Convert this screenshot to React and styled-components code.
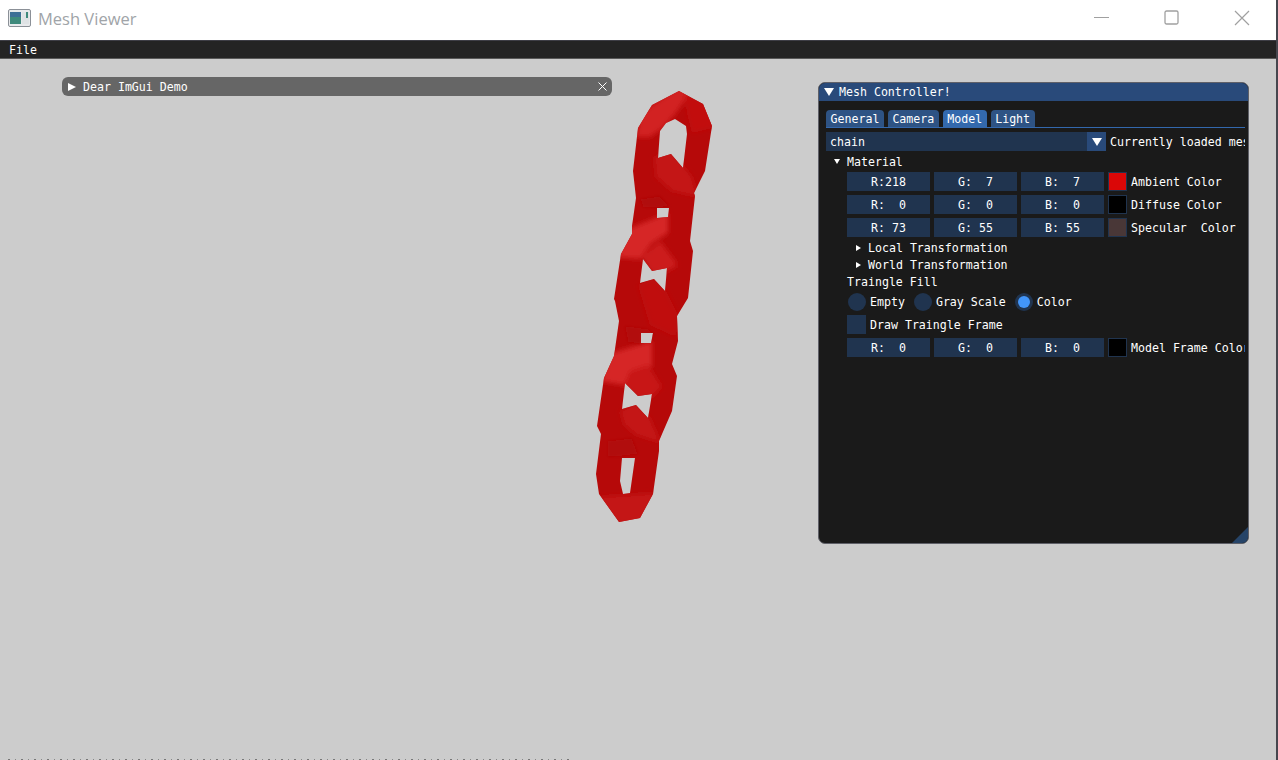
import styled, { createGlobalStyle } from 'styled-components';

const GlobalStyle = createGlobalStyle`
  html, body {
    margin: 0;
    padding: 0;
    width: 1278px;
    height: 760px;
    overflow: hidden;
    background: #ccc;
  }
`;

const Screen = styled.div`
  position: relative;
  width: 1278px;
  height: 760px;
  box-sizing: border-box;
  border-right: 2px solid #46464e;
  display: flex;
  flex-direction: column;
  overflow: hidden;
  font-family: "DejaVu Sans Mono", "Liberation Mono", monospace;
  font-size: 11.6px;
  color: #fff;
  white-space: pre;
`;

const TitleBar = styled.header`
  height: 40px;
  flex: none;
  display: flex;
  align-items: center;
  background: #fff;
  padding-left: 8px;
  font-family: "Open Sans", "Noto Sans", sans-serif;
`;

const AppName = styled.span`
  margin-left: 6px;
  margin-top: -3px;
  font-size: 16.5px;
  color: #a0a4a8;
`;

const WinButtons = styled.div`
  margin-left: auto;
  display: flex;
  align-items: center;
  gap: 55px;
  margin-right: 26px;
  margin-top: -5px;
`;

const MenuBar = styled.nav`
  height: 19px;
  flex: none;
  display: flex;
  align-items: center;
  padding: 1px 0 0 9px;
  background: #242424;
  border-top: 1px solid #3e3e46;
  border-bottom: 1px solid #5a5a5a;
  box-sizing: border-box;
`;

const Canvas = styled.main`
  flex: 1;
  position: relative;
  background: #ccc;
`;

/* floating imgui windows sit on a free canvas */
const Collapsed = styled.div`
  position: absolute;
  left: 62px;
  top: 18px;
  width: 550px;
  height: 19px;
  box-sizing: border-box;
  border-radius: 6px;
  background: #666;
  display: flex;
  align-items: center;
  padding: 0 5px 0 6px;
`;

const TriRight = styled.i`
  width: 0;
  height: 0;
  margin-right: ${(p) => p.$gap}px;
  border-left: ${(p) => p.$size}px solid #fff;
  border-top: ${(p) => p.$size * 0.6}px solid transparent;
  border-bottom: ${(p) => p.$size * 0.6}px solid transparent;
`;

const TriDown = styled.i`
  width: 0;
  height: 0;
  margin-right: ${(p) => p.$gap}px;
  border-top: ${(p) => p.$size}px solid #fff;
  border-left: ${(p) => p.$size * 0.65}px solid transparent;
  border-right: ${(p) => p.$size * 0.65}px solid transparent;
`;

const CloseIcon = styled.svg`
  margin-left: auto;
  width: 9px;
  height: 9px;
`;

const Controller = styled.section`
  position: absolute;
  left: 818px;
  top: 23px;
  width: 431px;
  height: 462px;
  box-sizing: border-box;
  border: 1px solid #5f6068;
  border-radius: 7px;
  background: #1a1a1a;
  overflow: hidden;
  display: flex;
  flex-direction: column;
`;

const ControllerTitle = styled.div`
  height: 18px;
  flex: none;
  display: flex;
  align-items: center;
  padding-left: 5px;
  background: #294a7a;
`;

const Body = styled.div`
  position: relative;
  flex: 1;
  padding: 9px 3px 0 7px;
  overflow: hidden;
`;

const Tabs = styled.div`
  display: flex;
  gap: 4px;
  height: 17px;
  border-bottom: 1px solid #3368ad;
`;

const Tab = styled.div`
  height: 17px;
  padding: 0 4.5px;
  display: flex;
  align-items: center;
  border-radius: 4px 4px 0 0;
  background: ${(p) => (p.$active ? '#3369ad' : '#2e5384')};
`;

const ComboRow = styled.div`
  display: flex;
  align-items: center;
  gap: 4px;
  margin-top: 4px;
  height: 19px;
  overflow: hidden;
`;

const Combo = styled.div`
  flex: none;
  width: 280px;
  height: 19px;
  display: flex;
  background: #20344f;
`;

const ComboValue = styled.div`
  flex: 1;
  padding-left: 4px;
  display: flex;
  align-items: center;
`;

const ComboArrow = styled.div`
  width: 19px;
  display: flex;
  align-items: center;
  justify-content: center;
  background: #294a7a;
`;

const TreeNode = styled.div`
  display: flex;
  align-items: center;
  height: 17px;
  margin-top: ${(p) => p.$top ?? 0}px;
  padding-left: ${(p) => p.$indent}px;
`;

const Plain = styled.div`
  height: 17px;
  display: flex;
  align-items: center;
  padding-left: 21px;
`;

const ColorRow = styled.div`
  display: flex;
  align-items: center;
  height: 19px;
  margin-top: ${(p) => p.$top ?? 4}px;
  padding-left: 21px;
  gap: 4px;
  overflow: hidden;
`;

const Channel = styled.div`
  flex: none;
  width: 83px;
  height: 19px;
  display: flex;
  align-items: center;
  justify-content: center;
  background: #20344f;
`;

const Swatch = styled.div`
  flex: none;
  width: 19px;
  height: 19px;
  box-sizing: border-box;
  border: 1px solid #20344f;
  background: ${(p) => p.$color};
`;

const RadioRow = styled.div`
  display: flex;
  align-items: center;
  height: 19px;
  margin-top: 2px;
  padding-left: 22px;
`;

const Radio = styled.span`
  width: 18px;
  height: 18px;
  border-radius: 50%;
  background: #20344f;
  margin-right: 4px;
  display: flex;
  align-items: center;
  justify-content: center;
  &::after {
    content: '';
    width: 12px;
    height: 12px;
    border-radius: 50%;
    background: ${(p) => (p.$on ? '#4296fa' : 'transparent')};
  }
`;

const RadioLabel = styled.span`
  margin-right: 9px;
`;

const CheckRow = styled.div`
  display: flex;
  align-items: center;
  height: 19px;
  margin-top: 4px;
  padding-left: 21px;
  gap: 4px;
`;

const Check = styled.span`
  width: 19px;
  height: 19px;
  background: #20344f;
`;

const Grip = styled.div`
  position: absolute;
  right: 0;
  bottom: 0;
  width: 16px;
  height: 16px;
  background: #264468;
  clip-path: polygon(100% 0, 100% 100%, 0 100%);
`;

const ChainSvg = styled.svg`
  position: absolute;
  left: 0;
  top: -58px;
  width: 1278px;
  height: 760px;
  pointer-events: none;
`;

const BottomNoise = styled.div`
  position: absolute;
  left: 8px;
  bottom: 0;
  width: 564px;
  height: 1px;
  background: repeating-linear-gradient(90deg, #777 0 2px, #ccc 2px 7px, #888 7px 8px, #ccc 8px 13px);
`;

const outline =
  'M679 90L703 103L712 125L705 170L694 192L695 195L690 240L693 250L688 297L677 315L678 340L672 363L677 375L672 410L659 440L659 450L653 493L640 517L619 521L599 493L596 473L601 433L597 425L604 377L614 355L619 320L615 300L614 298L621 253L632 233L632 225L636 197L633 170L638 127L652 104Z' +
  'M660 130L666 122L675 118L686 125L687 133L683 167L671 153L658 157Z' +
  'M657 207L669 207L668 216L657 217Z' +
  'M643 258L652 270L667 267L665 290L654 278L640 282Z' +
  'M641 332L653 332L651 342L641 342Z' +
  'M625 382L638 395L652 393L648 417L636 404L622 408Z' +
  'M622 457L635 457L630 492L623 493L620 480Z';

/* lit faces of each link, blurred so they melt into the base red */
const softShades = [
  ['640,112 679,86 690,92 676,112 664,126 650,136 636,136', '#d22222'],
  ['684,94 708,100 716,126 692,132 688,116', '#c21010'],
  ['654,156 672,150 692,176 698,196 672,190 656,176', '#c41414'],
  ['668,212 628,228 616,256 640,258 652,242 668,232', '#d62626'],
  ['642,256 660,240 678,264 668,270 652,272', '#cc1c1c'],
  ['638,284 654,278 666,290 678,314 676,336 650,324', '#c01111'],
  ['652,340 612,352 600,380 624,384 634,370 652,366', '#d62626'],
  ['624,384 630,370 648,364 662,386 652,396 638,398', '#c81818'],
  ['620,410 636,402 650,417 661,442 636,434 624,424', '#c41414'],
  ['598,496 656,492 642,520 618,524', '#c41616'],
];

/* darker creases where one link passes under another */
const creases = [
  ['640,198 660,195 669,205 657,207 643,206', '#b00707'],
  ['625,325 648,328 656,335 641,332 641,343 628,341', '#b20808'],
  ['608,440 632,437 638,453 622,455 608,456', '#b10707'],
];

const Chain = () => (
  <ChainSvg viewBox="0 0 1278 760">
    <defs>
      <clipPath id="silhouette">
        <path d={outline} clipRule="evenodd" />
      </clipPath>
      <filter id="soft" x="-20%" y="-20%" width="140%" height="140%">
        <feGaussianBlur stdDeviation="2.4" />
      </filter>
      <filter id="crease" x="-20%" y="-20%" width="140%" height="140%">
        <feGaussianBlur stdDeviation="1.5" />
      </filter>
    </defs>
    <path d={outline} fill="#b60909" fillRule="evenodd" />
    <g clipPath="url(#silhouette)">
      <g filter="url(#soft)">
        {softShades.map(([points, fill]) => (
          <polygon key={points} points={points} fill={fill} />
        ))}
      </g>
      <g filter="url(#crease)">
        {creases.map(([points, fill]) => (
          <polygon key={points} points={points} fill={fill} />
        ))}
      </g>
    </g>
  </ChainSvg>
);

const materialRows = [
  { vals: ['R:218', 'G:  7', 'B:  7'], color: '#da0707', label: 'Ambient Color' },
  { vals: ['R:  0', 'G:  0', 'B:  0'], color: '#000', label: 'Diffuse Color' },
  { vals: ['R: 73', 'G: 55', 'B: 55'], color: '#493737', label: 'Specular  Color' },
];

const Channels = ({ vals }) =>
  vals.map((v) => <Channel key={v}>{v}</Channel>);

const App = () => {
  return (
    <Screen>
      <GlobalStyle />
      <TitleBar>
        <svg width="24" height="19" viewBox="0 0 24 19" style={{ marginTop: -4 }}>
          <rect x="0.5" y="0.5" width="22" height="17" rx="1.5" fill="#e8eaec" stroke="#8b9097" />
          <rect x="2" y="3" width="11" height="12" fill="#3f8a7c" />
          <rect x="2" y="3" width="11" height="5" fill="#3d6f96" />
          <rect x="14" y="3" width="7" height="12" fill="#dfe3e5" />
          <rect x="18" y="3" width="2" height="6" fill="#3f8a7c" />
        </svg>
        <AppName>Mesh Viewer</AppName>
        <WinButtons>
          <svg width="15" height="15" viewBox="0 0 15 15"><path d="M0 7.5H15" stroke="#a0a0a0" /></svg>
          <svg width="15" height="15" viewBox="0 0 15 15"><rect x="1" y="1" width="13" height="13" rx="1.5" fill="none" stroke="#a0a0a0" strokeWidth="1.3" /></svg>
          <svg width="16" height="16" viewBox="0 0 16 16"><path d="M1 1L15 15M15 1L1 15" stroke="#a0a0a0" strokeWidth="1.2" /></svg>
        </WinButtons>
      </TitleBar>
      <MenuBar>File</MenuBar>
      <Canvas>
        <Chain />
        <Collapsed>
          <TriRight $size={8} $gap={7} />
          Dear ImGui Demo
          <CloseIcon viewBox="0 0 9 9"><path d="M0.5 0.5L8.5 8.5M8.5 0.5L0.5 8.5" stroke="#fff" /></CloseIcon>
        </Collapsed>
        <Controller>
          <ControllerTitle>
            <TriDown $size={8} $gap={5} />
            Mesh Controller!
          </ControllerTitle>
          <Body>
            <Tabs>
              <Tab>General</Tab>
              <Tab>Camera</Tab>
              <Tab $active>Model</Tab>
              <Tab>Light</Tab>
            </Tabs>
            <ComboRow>
              <Combo>
                <ComboValue>chain</ComboValue>
                <ComboArrow><TriDown $size={8} $gap={0} /></ComboArrow>
              </Combo>
              Currently loaded mesh
            </ComboRow>
            <TreeNode $indent={8} $top={2}>
              <TriDown $size={5} $gap={7} />
              Material
            </TreeNode>
            {materialRows.map((row, i) => (
              <ColorRow key={row.label} $top={i === 0 ? 2 : 4}>
                <Channels vals={row.vals} />
                <Swatch $color={row.color} />
                {row.label}
              </ColorRow>
            ))}
            <TreeNode $indent={30} $top={2}>
              <TriRight $size={5} $gap={7} />
              Local Transformation
            </TreeNode>
            <TreeNode $indent={30}>
              <TriRight $size={5} $gap={7} />
              World Transformation
            </TreeNode>
            <Plain>Traingle Fill</Plain>
            <RadioRow>
              <Radio /><RadioLabel>Empty</RadioLabel>
              <Radio /><RadioLabel>Gray Scale</RadioLabel>
              <Radio $on /><RadioLabel>Color</RadioLabel>
            </RadioRow>
            <CheckRow>
              <Check />
              Draw Traingle Frame
            </CheckRow>
            <ColorRow>
              <Channels vals={['R:  0', 'G:  0', 'B:  0']} />
              <Swatch $color="#000" />
              Model Frame Color
            </ColorRow>
            <Grip />
          </Body>
        </Controller>
        <BottomNoise />
      </Canvas>
    </Screen>
  );
};

export default App;
